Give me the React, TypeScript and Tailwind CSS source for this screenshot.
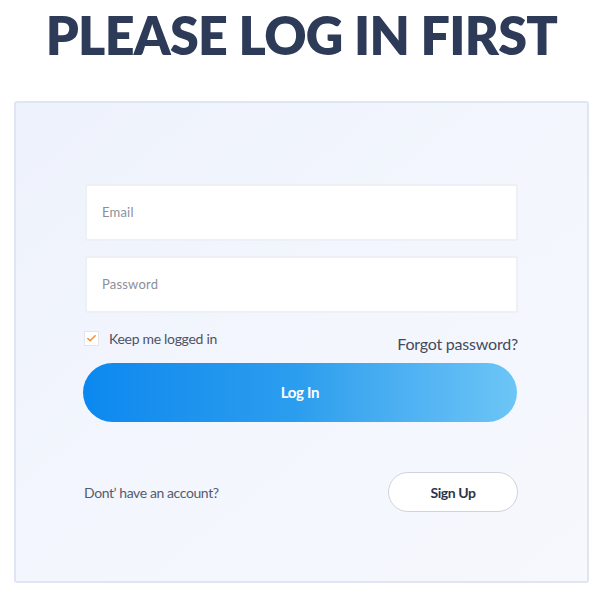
import { Check } from 'lucide-react';

export default function App() {
  return (
    <div className="w-[603px] h-[598px] bg-white font-['Lato',sans-serif] overflow-hidden">
      <h1 className="pt-[7px] text-center text-[52px] leading-[56px] font-extrabold text-[#2e3b58] tracking-[-0.7px]">
        PLEASE LOG IN FIRST
      </h1>

      <div className="mt-[38px] mx-[14px] h-[482px] rounded-[3px] border-2 border-[#dfe5f2] bg-linear-to-br from-[#eef2fc] via-[#f3f6fd] to-[#f6f8fd] px-[69px] pt-[81px]">
        <div className="flex flex-col gap-[15px]">
          <div className="h-[57px] bg-white border-2 border-[#edf0f5] rounded-[2px] flex items-center px-[15px] text-[13px] text-[#8b8f99] tracking-[0.2px]">
            Email
          </div>
          <div className="h-[57px] bg-white border-2 border-[#edf0f5] rounded-[2px] flex items-center px-[15px] text-[13px] text-[#8b8f99] tracking-[0.2px]">
            Password
          </div>
        </div>

        <div className="mt-[15px] flex items-start justify-between">
          <label className="-ml-[1px] flex items-center gap-[10px]">
            <span className="w-[15px] h-[15px] bg-white border border-[#e2e5ec] flex items-center justify-center">
              <Check className="w-[11px] h-[11px] text-[#f0923a]" strokeWidth={3.5} />
            </span>
            <span className="text-[14px] text-[#4d5366] tracking-[-0.3px]">Keep me logged in</span>
          </label>
          <span className="mt-[4px] text-[16px] text-[#444a5c] tracking-[-0.2px]">Forgot password?</span>
        </div>

        <button className="mt-[7px] -ml-[2px] w-[434px] h-[59px] rounded-full bg-linear-to-r from-[#0a88ef] via-[#2c9eee] to-[#6cc5f6] text-white text-[15px] font-bold tracking-[-0.3px]">
          Log In
        </button>

        <div className="mt-[50px] flex items-center justify-between">
          <span className="-ml-[1px] text-[14px] text-[#555b70] tracking-[-0.4px]">Dont’ have an account?</span>
          <button className="w-[130px] h-[40px] rounded-full bg-white border border-[#cfd3dc] text-[14px] font-bold text-[#2e3446] tracking-[-0.4px]">
            Sign Up
          </button>
        </div>
      </div>
    </div>
  );
}
